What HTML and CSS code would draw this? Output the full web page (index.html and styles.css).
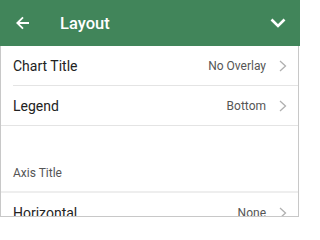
FILE: index.html
```html
<!DOCTYPE html>
<html>
<head>
<meta charset="utf-8">
<link rel="stylesheet" href="styles.css">
</head>
<body>
<div class="header">
  <svg class="back" width="14" height="14" viewBox="0 0 14 14"><path d="M13 7H1.8M7 1.3L1.3 7L7 12.7" fill="none" stroke="#fff" stroke-width="1.8"/></svg>
  <div class="title">Layout</div>
  <svg class="down" width="16" height="10" viewBox="0 0 16 10"><path d="M1.5 1.5L8 8L14.5 1.5" fill="none" stroke="#fff" stroke-width="2.6"/></svg>
</div>
<div class="content">
  <div class="row inset">
    <span class="label">Chart Title</span>
    <span class="value">No Overlay</span>
    <svg class="chev" width="8" height="12" viewBox="0 0 8 12"><path d="M1 1L6.5 6L1 11" fill="none" stroke="#b0b0b0" stroke-width="1.3"/></svg>
  </div>
  <div class="row full">
    <span class="label">Legend</span>
    <span class="value">Bottom</span>
    <svg class="chev" width="8" height="12" viewBox="0 0 8 12"><path d="M1 1L6.5 6L1 11" fill="none" stroke="#b0b0b0" stroke-width="1.3"/></svg>
  </div>
  <div class="section">Axis Title</div>
  <div class="row last">
    <span class="label">Horizontal</span>
    <span class="value">None</span>
    <svg class="chev" width="8" height="12" viewBox="0 0 8 12"><path d="M1 1L6.5 6L1 11" fill="none" stroke="#b0b0b0" stroke-width="1.3"/></svg>
  </div>
</div>
</body>
</html>
```
FILE: styles.css
```css
html, body {
  margin: 0;
  padding: 0;
  background: #fff;
}
body {
  width: 300px;
  height: 217px;
  overflow: hidden;
  font-family: Roboto, "Liberation Sans", sans-serif;
}
.header {
  height: 46px;
  background: #41855a;
  display: flex;
  align-items: center;
  padding: 0 14px 0 16px;
  box-sizing: border-box;
}
.back {
  display: block;
}
.title {
  color: #fff;
  font-size: 16.5px;
  font-weight: 500;
  margin-left: 30px;
  flex: 1;
}
.down {
  display: block;
}
.content {
  width: 299px;
  height: 171px;
  box-sizing: border-box;
  border-left: 1px solid #c8c8c8;
  border-right: 1px solid #c8c8c8;
  border-bottom: 1px solid #c8c8c8;
  overflow: hidden;
}
.row {
  height: 39px;
  display: flex;
  align-items: center;
  padding: 0 11px 0 12px;
  position: relative;
}
.row.inset::after {
  content: "";
  position: absolute;
  left: 12px;
  right: 0;
  bottom: -1px;
  height: 1px;
  background: #e4e4e4;
}
.row.inset {
  margin-bottom: 1px;
}
.row.full {
  border-bottom: 1px solid #e4e4e4;
}
.row.last {
  height: 40px;
  padding-top: 0;
  box-sizing: border-box;
}
.label {
  flex: 1;
  font-size: 14px;
  color: #222;
}
.value {
  font-size: 12px;
  color: #555;
  margin-right: 13px;
}
.chev {
  display: block;
}
.section {
  height: 67px;
  box-sizing: border-box;
  border-bottom: 2px solid #eeeeee;
  padding: 40px 0 0 12px;
  font-size: 12px;
  color: #555;
}
```
